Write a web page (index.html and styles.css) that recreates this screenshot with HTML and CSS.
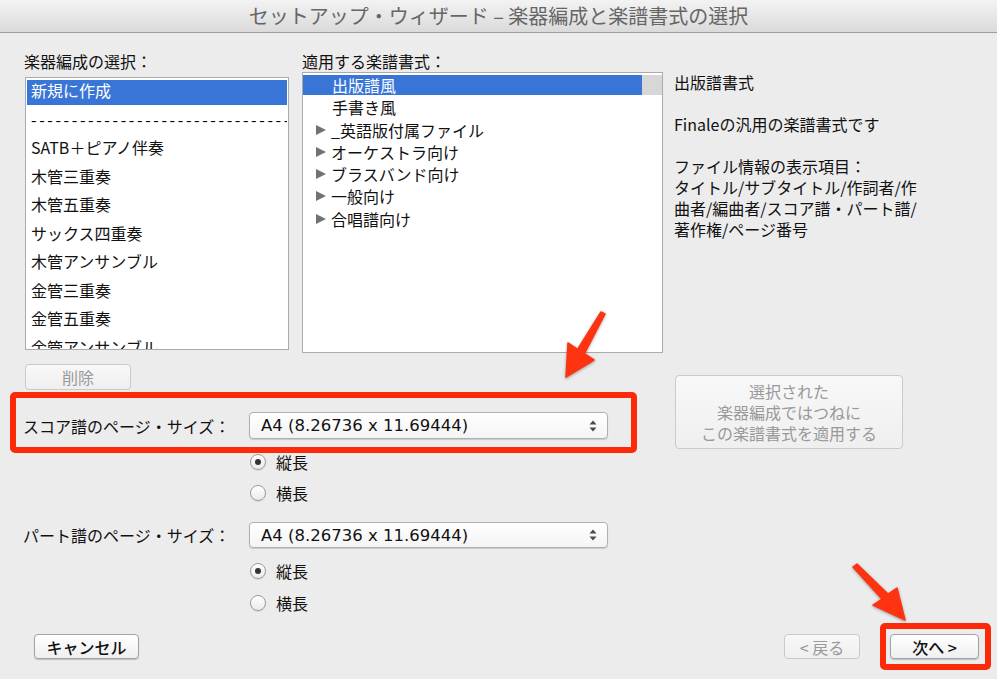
FILE: index.html
```html
<!DOCTYPE html>
<html lang="ja">
<head>
    <meta charset="UTF-8">
    <meta name="viewport" content="width=device-width, initial-scale=1.0">
    <title>セットアップ・ウィザード</title>
    <link rel="stylesheet" href="styles.css">
</head>
<body>
<div class="window">
    <div class="titlebar">セットアップ・ウィザード – 楽器編成と楽譜書式の選択</div>

    <div class="top">
        <div class="ensemble">
            <div class="label">楽器編成の選択：</div>
            <div class="listbox ensemble-list">
                <div class="row selected">新規に作成</div>
                <div class="row dashes">----------------------------------------------</div>
                <div class="row">SATB＋ピアノ伴奏</div>
                <div class="row">木管三重奏</div>
                <div class="row">木管五重奏</div>
                <div class="row">サックス四重奏</div>
                <div class="row">木管アンサンブル</div>
                <div class="row">金管三重奏</div>
                <div class="row">金管五重奏</div>
                <div class="row">金管アンサンブル</div>
            </div>
        </div>

        <div class="styles">
            <div class="label">適用する楽譜書式：</div>
            <div class="listbox style-list">
                <div class="row selected"><span class="cell leaf">出版譜風</span><span class="gutter"></span></div>
                <div class="row"><span class="cell leaf">手書き風</span><span class="gutter"></span></div>
                <div class="row"><span class="cell"><i class="tri"></i>_英語版付属ファイル</span><span class="gutter"></span></div>
                <div class="row"><span class="cell"><i class="tri"></i>オーケストラ向け</span><span class="gutter"></span></div>
                <div class="row"><span class="cell"><i class="tri"></i>ブラスバンド向け</span><span class="gutter"></span></div>
                <div class="row"><span class="cell"><i class="tri"></i>一般向け</span><span class="gutter"></span></div>
                <div class="row"><span class="cell"><i class="tri"></i>合唱譜向け</span><span class="gutter"></span></div>
            </div>
        </div>

        <div class="info">
            <p>出版譜書式</p>
            <p>Finaleの汎用の楽譜書式です</p>
            <p>ファイル情報の表示項目：<br>タイトル/サブタイトル/作詞者/作<br>曲者/編曲者/スコア譜・パート譜/<br>著作権/ページ番号</p>
        </div>
    </div>

    <div class="bottom">
        <div class="sizes">
            <button class="btn disabled delete">削除</button>

            <div class="mark score-size">
                <span class="size-label">スコア譜のページ・サイズ：</span>
                <div class="select">
                    <span>A4 (8.26736 x 11.69444)</span>
                    <svg class="stepper" width="8" height="12" viewBox="0 0 8 12"><path d="M4 0.5 L7.5 4.5 H0.5 Z M4 11.5 L7.5 7.5 H0.5 Z" fill="#4a4a4a"/></svg>
                </div>
            </div>

            <div class="radios first">
                <label class="option"><span class="radio checked"></span>縦長</label>
                <label class="option"><span class="radio"></span>横長</label>
            </div>

            <div class="part-size">
                <span class="size-label">パート譜のページ・サイズ：</span>
                <div class="select">
                    <span>A4 (8.26736 x 11.69444)</span>
                    <svg class="stepper" width="8" height="12" viewBox="0 0 8 12"><path d="M4 0.5 L7.5 4.5 H0.5 Z M4 11.5 L7.5 7.5 H0.5 Z" fill="#4a4a4a"/></svg>
                </div>
            </div>

            <div class="radios second">
                <label class="option"><span class="radio checked"></span>縦長</label>
                <label class="option"><span class="radio"></span>横長</label>
            </div>
        </div>

        <div class="side">
            <button class="btn disabled apply">選択された<br>楽器編成ではつねに<br>この楽譜書式を適用する</button>
        </div>
    </div>

    <div class="footer">
        <button class="btn cancel">キャンセル</button>
        <button class="btn disabled back">&lt; 戻る</button>
        <div class="mark next-mark">
            <button class="btn next">次へ &gt;</button>
        </div>
    </div>

    <!-- annotation arrows -->
    <svg class="arrows" width="997" height="679" viewBox="0 0 997 679">
        <polygon points="601,312 605,314 584.4,353.7 594,360 566,377 568,343 577.6,349.3"/>
        <polygon points="853,567 857,564 888,594 897,588 905,620 873,605 882,599"/>
    </svg>
</div>
</body>
</html>
```

FILE: styles.css
```css
body {
    margin: 0;
    background: #ececec;
    font-family: "Noto Sans CJK JP", sans-serif;
    font-size: 16px;
    color: #111;
}
.window {
    position: relative;
    width: 997px;
    height: 679px;
    overflow: hidden;
}
.titlebar {
    height: 32px;
    line-height: 31px;
    border-bottom: 1px solid #9d9d9d;
    background: linear-gradient(#f3f3f3, #dadada);
    text-align: center;
    color: #666;
    font-size: 20px;
}

/* top area: lists + description */
.top {
    display: flex;
    height: 320px;
    padding-top: 18px;
    box-sizing: border-box;
}
.label {
    line-height: 20px;
}
.ensemble {
    margin-left: 24px;
}
.styles {
    margin-left: 13px;
}
.listbox {
    background: #fff;
    border: 1px solid #ababab;
    box-sizing: border-box;
    overflow: hidden;
}
.ensemble-list {
    width: 264px;
    height: 273px;
    margin: 6px 0 0 1px;
    padding: 2px 1px;
}
.ensemble-list .row {
    height: 25px;
    line-height: 20px;
    margin-bottom: 3.5px;
    padding-left: 4px;
    white-space: nowrap;
}
.row.selected {
    color: #fff;
}
.ensemble-list .row.selected {
    background: #3875d7;
}
.dashes {
    letter-spacing: 2.6px;
    overflow: hidden;
    color: #000;
}
.style-list {
    width: 361px;
    height: 281px;
    margin-top: 1px;
    padding-top: 2px;
}
.style-list .row {
    display: flex;
    height: 20px;
    line-height: 20px;
    margin-bottom: 2.3px;
}
.cell {
    flex: 1;
    display: flex;
    align-items: center;
    padding-left: 13px;
}
.cell.leaf {
    padding-left: 29px;
}
.gutter {
    width: 20px;
}
.style-list .row.selected .cell {
    background: #3875d7;
}
.style-list .row.selected .gutter {
    background: #d7d7d7;
}
.tri {
    width: 0;
    height: 0;
    border-left: 10px solid #727272;
    border-top: 5.5px solid transparent;
    border-bottom: 5.5px solid transparent;
    margin-right: 5px;
}
.info {
    margin-left: 11px;
    padding-top: 21px;
    line-height: 21px;
}
.info p {
    margin: 0 0 21px;
}

/* lower area */
.bottom {
    display: flex;
}
.sizes {
    width: 662px;
}
.btn {
    font-family: inherit;
    font-size: 16px;
    color: #111;
    border: 1px solid #a3a3a3;
    border-radius: 4px;
    background: linear-gradient(#ffffff, #efefef);
    box-shadow: 0 1px 1px rgba(0, 0, 0, 0.2);
    padding: 0;
    box-sizing: border-box;
}
.btn.disabled {
    color: #999;
    border-color: #cacaca;
    background: linear-gradient(#f8f8f8, #efefef);
    box-shadow: none;
}
.delete {
    display: block;
    width: 106px;
    height: 26px;
    margin: 11px 0 0 25px;
}
.mark {
    border: 6px solid #fc2a08;
    border-radius: 5px;
    box-sizing: border-box;
}
.score-size {
    display: flex;
    align-items: center;
    width: 627px;
    height: 61px;
    margin: 2px 0 0 10px;
    padding: 6px 0 0 7px;
}
.size-label {
    width: 226px;
}
.select {
    display: flex;
    align-items: center;
    justify-content: space-between;
    width: 359px;
    height: 27px;
    padding-left: 11px;
    box-sizing: border-box;
    border: 1px solid #b0b0b0;
    border-radius: 4px;
    background: linear-gradient(#ffffff, #f4f4f4);
    box-shadow: 0 1px 1px rgba(0, 0, 0, 0.15);
    font-family: "DejaVu Sans", "Noto Sans CJK JP", sans-serif;
    font-size: 16.5px;
    color: #111;
}
.stepper {
    margin-right: 10px;
}
.radios {
    margin-left: 250px;
}
.option {
    display: flex;
    align-items: center;
    height: 18px;
    margin-top: 13px;
}
.radios.first .option:first-child {
    margin-top: 0;
}
.radios.second .option {
    margin-top: 14px;
}
.radio {
    width: 16px;
    height: 16px;
    box-sizing: border-box;
    border: 1px solid #9c9c9c;
    border-radius: 50%;
    background: linear-gradient(#ffffff, #eaeaea);
    box-shadow: 0 1px 1px rgba(0, 0, 0, 0.1);
    margin-right: 10px;
    display: flex;
    align-items: center;
    justify-content: center;
}
.radio.checked::after {
    content: "";
    width: 6px;
    height: 6px;
    border-radius: 50%;
    background: #333;
}
.part-size {
    display: flex;
    align-items: center;
    margin: 20px 0 0 23px;
}
.part-size .select {
    height: 26px;
}
.side {
    margin-left: 13px;
}
.apply {
    width: 228px;
    height: 74px;
    margin-top: 22px;
    line-height: 21px;
    color: #8e8e8e;
}

/* footer buttons */
.footer {
    display: flex;
    align-items: center;
    height: 47px;
    margin-top: 11px;
}
.cancel {
    width: 105px;
    height: 25px;
    margin-left: 34px;
    font-weight: 500;
}
.back {
    width: 76px;
    height: 25px;
    margin-left: auto;
}
.next-mark {
    display: flex;
    align-items: center;
    width: 111px;
    height: 47px;
    margin: 0 6px 0 20px;
    padding-left: 4px;
}
.next {
    width: 89px;
    height: 25px;
    font-weight: 500;
}
.arrows {
    position: absolute;
    left: 0;
    top: 0;
    pointer-events: none;
}
.arrows polygon {
    fill: #fd3312;
    stroke: #fd3312;
    stroke-width: 1.5;
    stroke-linejoin: round;
    filter: drop-shadow(0 1px 1.5px rgba(0, 0, 0, 0.35));
}
```
